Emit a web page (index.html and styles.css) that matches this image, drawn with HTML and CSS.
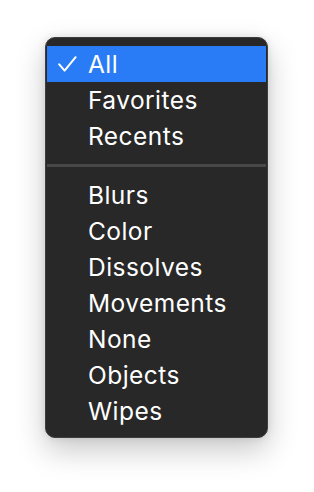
FILE: index.html
```html
<!DOCTYPE html>
<html>
<head>
<meta charset="utf-8">
<link rel="stylesheet" href="styles.css">
</head>
<body>
<div class="stage">
  <div class="menu">
    <div class="item selected"><span class="check"><svg width="19" height="16" viewBox="0 0 19 16"><path d="M1.2 8.3 L6.6 14.6 L17.6 1.2" fill="none" stroke="#fff" stroke-width="2" stroke-linecap="round" stroke-linejoin="round"/></svg></span>All</div>
    <div class="item">Favorites</div>
    <div class="item">Recents</div>
    <div class="sep"></div>
    <div class="item">Blurs</div>
    <div class="item">Color</div>
    <div class="item">Dissolves</div>
    <div class="item">Movements</div>
    <div class="item">None</div>
    <div class="item">Objects</div>
    <div class="item">Wipes</div>
  </div>
</div>
</body>
</html>
```
FILE: styles.css
```css
html, body {
  margin: 0;
  padding: 0;
  background: #ffffff;
}
.stage {
  width: 314px;
  height: 492px;
  padding-top: 37px;
  padding-left: 45px;
  box-sizing: border-box;
}
.menu {
  width: 223px;
  box-sizing: border-box;
  background: #282828;
  border: 1px solid #3e3e3e;
  border-radius: 10px;
  padding: 8px 1px;
  box-shadow: 0 12px 30px rgba(0,0,0,0.22), 0 0 8px rgba(0,0,0,0.1);
  font-family: Inter, "Noto Sans", sans-serif;
  font-size: 24.5px;
  font-weight: 400;
  color: #ffffff;
}
.item {
  height: 36px;
  display: flex;
  align-items: center;
  padding-left: 41px;
  padding-bottom: 1px;
  box-sizing: border-box;
  position: relative;
  letter-spacing: 0.45px;
}
.item.selected {
  background: #2a7cf6;
}
.check {
  position: absolute;
  left: 11px;
  top: 10px;
  display: flex;
}
.sep {
  height: 23px;
  display: flex;
  align-items: center;
}
.sep::before {
  content: "";
  display: block;
  width: 100%;
  height: 3px;
  background: #484848;
}
```
